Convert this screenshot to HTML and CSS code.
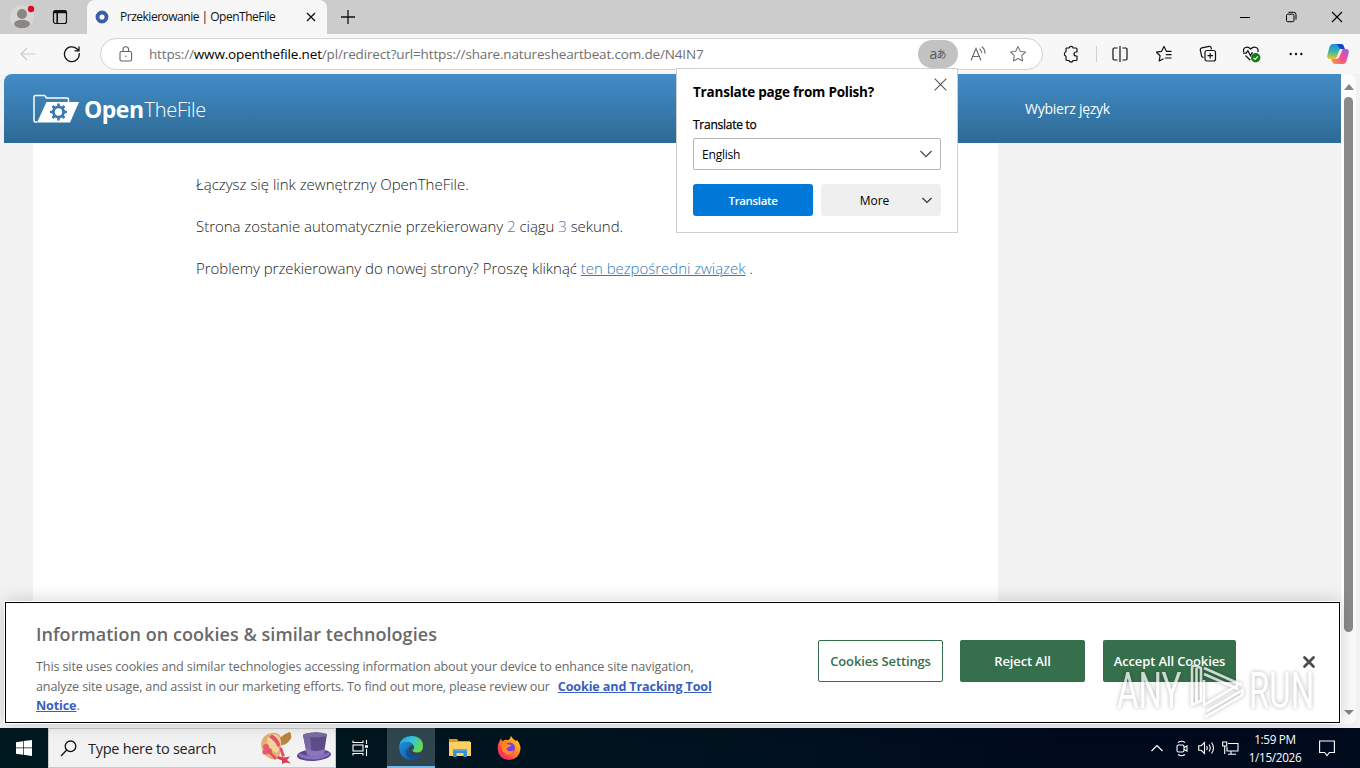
FILE: index.html
```html
<!DOCTYPE html>
<html lang="pl">
<head>
<meta charset="utf-8">
<title>Przekierowanie | OpenTheFile</title>
<link rel="stylesheet" href="styles.css">
</head>
<body>
<div class="screen">
  <div class="tabstrip">
    <div class="tabstrip-left">
      <svg class="avatar" width="26" height="26" viewBox="0 0 26 26"><circle cx="13" cy="13" r="12" fill="#d8d6d4"/><circle cx="13" cy="10" r="5" fill="#8b8683"/><ellipse cx="13" cy="20" rx="8" ry="4.2" fill="#8b8683"/><circle cx="22" cy="5" r="3.2" fill="#d80f24"/></svg>
      <svg class="workspace" width="16" height="16" viewBox="0 0 16 16" fill="none" stroke="#111" stroke-width="1.2"><rect x="1.5" y="1.5" width="13" height="13" rx="2"/><path d="M1.500 3.400h13M2 2.400h12M5.200 4v10" stroke-width="1.600"/></svg>
    </div>
    <div class="tab">
      <svg width="14" height="14" viewBox="0 0 14 14"><circle cx="7" cy="7" r="4.500" fill="#fff" stroke="#3b5fa6" stroke-width="3.900"/></svg>
      <span class="tab-title">Przekierowanie | OpenTheFile</span>
      <svg class="tab-close" width="10" height="10" viewBox="0 0 10 10" stroke="#111" stroke-width="1.300"><path d="M1 1l8 8M9 1l-8 8"/></svg>
    </div>
    <svg class="newtab" width="14" height="14" viewBox="0 0 14 14" stroke="#111" stroke-width="1.300"><path d="M7 0v14M0 7h14"/></svg>
    <div class="window-buttons">
      <svg width="12" height="12" viewBox="0 0 12 12" stroke="#000"><path d="M1 6.500h10"/></svg>
      <svg width="12" height="12" viewBox="0 0 12 12" fill="none" stroke="#000"><rect x="1.500" y="3.200" width="7.500" height="7.500" rx="1.300"/><path d="M3.500 1.300h5.200a2.300 2.300 0 0 1 2.300 2.300v5"/></svg>
      <svg width="12" height="12" viewBox="0 0 12 12" stroke="#000" stroke-width="1.100"><path d="M1 1l10 10M11 1L1 11"/></svg>
    </div>
  </div>

  <div class="toolbar">
    <svg class="back" width="16" height="14" viewBox="0 0 16 14" fill="none" stroke="#c9c9c9" stroke-width="1.100"><path d="M15.500 7H1M7 1L1 7l6 6"/></svg>
    <svg class="reload" width="18" height="18" viewBox="0 0 18 18" fill="none" stroke="#111" stroke-width="1.300"><path d="M16.200 8.200a7.400 7.400 0 1 1-2.400-4.500l1.900 1.800M16 1.500v4.300h-4.400"/></svg>
    <div class="address">
      <svg class="lock" width="14" height="16" viewBox="0 0 14 16" fill="none" stroke="#666" stroke-width="1.100"><rect x="1" y="5.500" width="11.600" height="9.500" rx="1.500"/><path d="M4 5.500V3.600a2.800 2.800 0 0 1 5.600 0v1.900"/><circle cx="6.800" cy="10.200" r=".7" fill="#666" stroke="none"/></svg>
      <span class="url">https://<b>www.openthefile.net</b>/pl/redirect?url=https://share.naturesheartbeat.com.de/N4IN7</span>
      <span class="translate-pill">a<small>あ</small></span>
      <svg class="aloud" width="18" height="16" viewBox="0 0 18 16" fill="none" stroke="#666" stroke-width="1.100"><path d="M1 14.500L6 2.500l5 12M2.700 10.500h6.600M9.500 2.600q2.200 1.800 2.400 4.600M11.800.8q3.300 2.600 3.200 7"/></svg>
      <svg class="star" width="18" height="18" viewBox="0 0 18 18" fill="none" stroke="#777" stroke-width="1.100" stroke-linejoin="round"><path d="M9 1.500l2.300 4.800 5.200.7-3.800 3.700.9 5.300L9 13.500 4.400 16l.9-5.300L1.500 7l5.200-.7z"/></svg>
    </div>
    <svg class="ext" width="16" height="18" viewBox="0 0 16 18" fill="none" stroke="#111" stroke-width="1.200" stroke-linejoin="round"><path d="M3.500 3H6a2.200 2.200 0 0 1 4.200 0H13a1 1 0 0 1 1 1v3h-1a1.900 1.900 0 0 0 0 4h1v3.500a1 1 0 0 1-1 1h-2.800a2.200 2.200 0 0 1-4.200 0H4a1 1 0 0 1-1-1v-3.300a2.300 2.300 0 0 1 0-4.400V4a1 1 0 0 1 .5-1z"/></svg>
    <i class="divider"></i>
    <svg class="split" width="16" height="16" viewBox="0 0 16 16" fill="none" stroke="#111" stroke-width="1.200"><path d="M8 0v16M5.600 2H2.200a1.200 1.200 0 0 0-1.200 1.200v9.600A1.200 1.200 0 0 0 2.200 14h3.400M10.400 2h3.400A1.200 1.200 0 0 1 15 3.200v9.600a1.200 1.200 0 0 1-1.200 1.200h-3.400"/></svg>
    <svg class="favs" width="18" height="18" viewBox="0 0 18 18" fill="none" stroke="#111" stroke-width="1.200" stroke-linejoin="round"><path d="M16.500 6.400h-5L9 1.500 6.600 6.300 1.500 7.200l3.600 3.500L4.200 16l4.300-2.300M10.800 9.700h5.800M9.800 13h6.800"/></svg>
    <svg class="coll" width="18" height="18" viewBox="0 0 18 18" fill="none" stroke="#111" stroke-width="1.200"><path d="M4.500 12.500l-1-.4a2 2 0 0 1-1-1.500L1.300 5.200a2 2 0 0 1 1.500-2.400L10 1.300a2 2 0 0 1 2.200 1.500l.3 1.500"/><rect x="6" y="5.500" width="10.500" height="10.500" rx="2"/><path d="M11.200 8v5.500M8.500 10.700H14"/></svg>
    <svg class="heart" width="19" height="18" viewBox="0 0 19 18" fill="none" stroke="#111" stroke-width="1.200"><path d="M1.700 7C.5 2.500 5.500.5 8.700 4 12 .5 17.300 2.500 15.800 7M1 8.200h3.200l1.700-2.500 2.600 5L10 7.800h1M3.500 10.500l4.800 4.700"/><circle cx="13.700" cy="12.700" r="4.700" fill="#107c10" stroke="none"/><path d="M11.500 12.800l1.600 1.600 2.800-3" stroke="#fff"/></svg>
    <svg class="dots" width="14" height="4" viewBox="0 0 14 4" fill="#111"><circle cx="1.700" cy="2" r="1.200"/><circle cx="7" cy="2" r="1.200"/><circle cx="12.300" cy="2" r="1.200"/></svg>
    <svg class="copilot" width="24" height="22" viewBox="0 0 24 22"><defs><linearGradient id="ca" x1="0" y1="0" x2="0" y2="1"><stop offset="0" stop-color="#1d8bf0"/><stop offset=".5" stop-color="#34b7a8"/><stop offset="1" stop-color="#f3c51f"/></linearGradient><linearGradient id="cb" x1="1" y1="0" x2="0" y2="1"><stop offset="0" stop-color="#a558e8"/><stop offset=".5" stop-color="#f0508c"/><stop offset="1" stop-color="#ff9c3c"/></linearGradient></defs><path d="M7 1h8q2 0 2.700 2l1 3h-3q-2 0-2.800 2.600L11 14q-.8 2-3 2H4q-3.500 0-2.600-4L3.500 4Q4.500 1 7 1z" fill="url(#ca)"/><path d="M13 1h2q2 0 2.700 2l1 3h-3q-2.200 0-3.300-2.500Q12 1.500 10 1z" fill="#1747c4"/><path d="M17 21H9q-2 0-2.700-2l-1-3h3q2 0 2.800-2.600L13 8q.8-2 3-2h4q3.500 0 2.600 4l-2.100 8q-1 3-3.500 3z" fill="url(#cb)"/><path d="M11.300 13l1.700-5q.5-1.500 1.700-2h2.100L13.300 14q-.8 2-3 2H8.500q2 0 2.800-3z" fill="#fff" opacity=".85"/></svg>
  </div>

  <div class="viewport">
    <div class="page">
      <header class="site-header">
        <svg class="logo" width="47" height="30" viewBox="0 0 47 30"><path d="M4 28H2.500Q1 28 1 26.500V3q0-1.500 1.500-1.500H11q1 0 1.500 1L13.500 4H34q1.500 0 1.500 1.500V8" fill="none" stroke="#fff" stroke-width="1.500"/><path d="M13.500 8H46L37 28.500H4z" fill="#fff"/><g transform="translate(25.500 18)" fill="#3a78ad"><circle r="6.500"/><path d="M-1.300-8.500h2.600v17h-2.600zM-8.500-1.300h17v2.600h-17z"/><path d="M-1.300-8.500h2.600v17h-2.600zM-8.500-1.300h17v2.600h-17z" transform="rotate(45)"/><circle r="3.700" fill="#fff"/></g></svg>
        <span class="brand-bold">Open</span><span class="brand-light">TheFile</span>
        <span class="lang">Wybierz język</span>
      </header>
      <main class="sheet">
        <p><span class="p1">Łączysz się link zewnętrzny OpenTheFile.</span></p>
        <p><span class="p2">Strona zostanie automatycznie przekierowany <em>2</em> ciągu <em>3</em> sekund.</span></p>
        <p><span class="p2">Problemy przekierowany do nowej strony? Proszę kliknąć <a>ten bezpośredni związek</a> .</span></p>
      </main>
    </div>
    <div class="scrollbar">
      <i class="arrow up"></i><i class="thumb"></i><i class="arrow down"></i>
    </div>

    <section class="cookies">
      <div class="cookie-text">
        <h2>Information on cookies &amp; similar technologies</h2>
        <div class="cl"><span class="c1">This site uses cookies and similar technologies accessing information about your device to enhance site navigation,</span></div>
        <div class="cl"><span class="c2">analyze site usage, and assist in our marketing efforts. To find out more, please review our</span><a class="c3">Cookie and Tracking Tool</a></div>
        <div class="cl"><a>Notice</a>.</div>
      </div>
      <div class="btn outline"><span>Cookies Settings</span></div>
      <div class="btn"><span>Reject All</span></div>
      <div class="btn wide"><span>Accept All Cookies</span></div>
      <svg class="cookie-close" width="14" height="14" viewBox="0 0 14 14" stroke="#4d4d4d" stroke-width="2.800" stroke-linecap="round"><path d="M2.500 2.500l9 9M11.500 2.500l-9 9"/></svg>
    </section>
  </div>

  <div class="taskbar">
    <div class="start"><svg width="16" height="16" viewBox="0 0 16 16" fill="#fff"><path d="M0 2.200l7-1v6.300H0zM7.700 1.100L16 0v7.500H7.700zM0 8.300h7v6.400l-7-1zM7.700 8.300H16V16l-8.300-1.200z"/></svg></div>
    <div class="search">
      <svg width="17" height="17" viewBox="0 0 17 17" fill="none" stroke="#111" stroke-width="1.300"><circle cx="10.500" cy="6.300" r="5.300"/><path d="M6.700 10L1 16"/></svg>
      <span class="search-text">Type here to search</span>
      <svg class="hats" width="72" height="34" viewBox="0 0 72 34">
        <path d="M1 12Q3 3 12 2q6-1 9 4 5-4 9-5 3 5-1 9-3 4-8 4.500 1 7-3 12-4 3-8 1Q1 24 1 12z" fill="#e3b070"/>
        <path d="M21 6q5-4 9-5 3 5-1 9-3 4-8 4-3-3 0-8z" fill="#b98544"/>
        <path d="M7 9q2-6 8-6 7 3 6 11-1 5-5 8-8-4-9-13z" fill="#f3d39a"/>
        <path d="M12 3.500q7 4 8.500 11l-2.500 2Q15 10 9 6z" fill="#e0566c"/>
        <g fill="#e65c73"><circle cx="6" cy="16" r="3"/><circle cx="9" cy="20" r="3"/><circle cx="5" cy="21" r="2.600"/></g>
        <path d="M8 18l9 9-2 2-8-9zM19 16l3 1 3 8-3 1z" fill="#dd5069"/>
        <path d="M18 25l6 1.500 6-1-3 3.500 4 3.500-5-1-4 1.500 0-3.500-5-2z" fill="#d93d5a"/>
        <ellipse cx="54" cy="24" rx="17" ry="6" fill="#5c4790" transform="rotate(-3 54 24)"/><path d="M38 22q15 7 32-1l-1 3q-13 8-29 2z" fill="#8772bd"/>
        <path d="M43 4q11-5 24-1l-3 19q-8 5-17 2z" fill="#5d4d86"/><path d="M43 4l4 20 5 1-2-21z" fill="#7968a4"/><ellipse cx="55" cy="4" rx="12" ry="2.600" fill="#7c6ba0"/><path d="M46 18q9 4 19 0l-.8 5q-8 4-17 1z" fill="#8a78bb"/>
      </svg>
    </div>
    <div class="task"><svg width="17" height="16" viewBox="0 0 17 16" fill="none" stroke="#fff" stroke-width="1.100"><path d="M1 .5v2h10v-2M1 15.500v-2h10v2M14.500 0v4M14.500 9v7"/><rect x="1" y="5" width="10" height="6"/><path d="M13 6.500h3" stroke-width="2.500"/></svg></div>
    <div class="task active"><svg width="26" height="26" viewBox="0 0 26 26"><defs><linearGradient id="ea" x1="0" y1="0" x2="1" y2=".4"><stop offset="0" stop-color="#1fa2e0"/><stop offset=".55" stop-color="#35c4dd"/><stop offset="1" stop-color="#66d84f"/></linearGradient><linearGradient id="eb" x1="0" y1="0" x2="1" y2="1"><stop offset="0" stop-color="#1c93dc"/><stop offset="1" stop-color="#0c4a94"/></linearGradient></defs><path d="M1.200 11Q3 1 13.500 1 25 1.500 25 11.500q0 6-6 6-5-.2-4.500-2.500 2-1 1.500-3.500Q14.500 7 9 7q-5.500 0-7.800 4z" fill="url(#ea)"/><path d="M1.200 11Q3.500 6.500 9 7q5 .5 6.800 4-3-1.500-4.800 1-2.500 6 4 9 3.500 1.300 8-.8Q19.500 25 13 25 1 24 1.200 11z" fill="url(#eb)"/><path d="M9 12q-4 8 4.500 13 6-.3 9.500-4.800-5 2-8.500.8Q9 18 9 12z" fill="#104e9c"/></svg></div>
    <div class="task"><svg width="22" height="20" viewBox="0 0 22 20"><path d="M0 1h8l1.500 2H21v4H0z" fill="#e29a1c"/><path d="M0 4h22v14H0z" fill="#fbd05e"/><path d="M4 11h14v8h-3.500v-4h-7v4H4z" fill="#3c8ed0"/><path d="M4 11h14v2H4z" fill="#58a8e4"/></svg></div>
    <div class="task"><svg width="24" height="24" viewBox="0 0 24 24"><defs><linearGradient id="fa" x1="1" y1="0" x2="0" y2="1"><stop offset="0" stop-color="#ffe52e"/><stop offset=".4" stop-color="#ff9020"/><stop offset=".75" stop-color="#ff3850"/><stop offset="1" stop-color="#e0208c"/></linearGradient></defs><path d="M2 6Q3 4 4 2.500 4.500 5 6 5q2-2 5-1 2-.5 3-4 2 3.500 5 5l1-1q3.500 4 3.500 9Q22.500 23 12 24 1 23 .7 13 .6 9 2 6z" fill="url(#fa)"/><circle cx="12.500" cy="12" r="5.500" fill="#7b3fe0"/><path d="M4.500 8q4-2.500 7 .5l3 .5q-1 2-3.500 2.200Q9 12 10 14q3 2.500 7 0-2 5-7 4.500Q4 17 4.500 8z" fill="#ff8a26"/></svg></div>
    <div class="tray">
      <svg class="chev" width="12" height="8" viewBox="0 0 12 8" fill="none" stroke="#fff" stroke-width="1.200"><path d="M.5 7L6 1.500 11.500 7"/></svg>
      <svg class="meet" width="12" height="17" viewBox="0 0 12 17" fill="none" stroke="#fff" stroke-width="1.100"><rect x="1" y="5" width="7" height="7" rx="1.500"/><path d="M8 7.500l3-1.500v5L8 9.500M2 2.500Q5.500 0 9 2.500M2 14.500q3.500 2.500 7 0"/></svg>
      <svg class="vol" width="17" height="14" viewBox="0 0 17 14" fill="none" stroke="#fff" stroke-width="1.100"><path d="M.7 4.700h2.500L6.500 1.500v11L3.200 9.300H.7zM8.500 5q1.500 2 0 4M11 3.500q2.500 3.500 0 7M13.500 1.500q4 5.500 0 11"/></svg>
      <svg class="net" width="17" height="14" viewBox="0 0 17 14" fill="none" stroke="#fff" stroke-width="1.100"><path d="M6 2.500h10v7.500H5V6M9 10v3M6 13.200h8M.7 1h4v4h-4zM2.700 5v8"/></svg>
      <div class="clock"><span class="time">1:59 PM</span><span class="date">1/15/2026</span></div>
      <svg class="note" width="16" height="17" viewBox="0 0 16 17" fill="none" stroke="#fff" stroke-width="1.100"><path d="M.6 1h14.800v11.500h-5L8 15.500l-2.400-3h-5z"/></svg>
    </div>
  </div>

  <div class="popup">
    <svg class="popup-close" width="13" height="13" viewBox="0 0 13 13" stroke="#555" stroke-width="1.100"><path d="M.7.7l11.600 11.600M12.300.7L.7 12.300"/></svg>
    <div class="popup-title">Translate page from Polish?</div>
    <div class="popup-label">Translate to</div>
    <div class="select"><span>English</span><svg width="12" height="8" viewBox="0 0 12 8" fill="none" stroke="#444" stroke-width="1.200"><path d="M.5 1L6 6.700 11.500 1"/></svg></div>
    <div class="popup-actions">
      <div class="primary">Translate</div>
      <div class="more"><span>More</span><svg width="10" height="7" viewBox="0 0 10 7" fill="none" stroke="#333" stroke-width="1.200"><path d="M.5 1L5 5.500 9.500 1"/></svg></div>
    </div>
  </div>

  <div class="watermark"><div class="wm-word"><span>ANY</span></div><svg width="56" height="58" viewBox="0 0 56 58" fill="none" stroke="#fff" stroke-width="2.600" stroke-linejoin="round"><path d="M3 43V6q0-3 4-2l5 2v33zM7.500 40V6M15 6l38 17M15 12l34 15M15 18v25l34-20M18 49l34-20M16 55l36-21q3-3 1-7"/></svg><div class="wm-word"><span>RUN</span></div></div>
</div>
</body>
</html>
```
FILE: styles.css
```css
* { box-sizing: border-box; }
body { margin: 0; font-family: "Open Sans", "Noto Sans", sans-serif; font-size: 12px; color: #111; }
svg { display: block; flex: none; }
.screen { position: relative; width: 1360px; height: 768px; overflow: hidden; background: #f7f7f7; display: flex; flex-direction: column; }
.screen span, .screen a { white-space: nowrap; }

.tabstrip { height: 34px; background: #ccc; display: flex; align-items: center; }
.tabstrip-left { width: 87px; height: 34px; display: flex; align-items: center; padding-left: 9px; }
.workspace { margin-left: 17px; }
.tab { width: 240px; height: 34px; background: #f7f7f7; border-radius: 8px 8px 0 0; display: flex; align-items: center; padding: 0 11px 0 8px; }
.tab-title { margin-left: 11px; margin-top: -1px; flex: 1; letter-spacing: -0.49px; }
.newtab { margin-left: 14px; }
.window-buttons { margin-left: auto; display: flex; gap: 34px; padding-right: 17px; }

.toolbar { height: 40px; display: flex; align-items: center; padding-left: 20px; background: #f7f7f7; }
.reload { margin-left: 27px; }
.address { margin-left: 19px; width: 943px; height: 32px; border: 1px solid #d2d2d2; border-radius: 16px; background: #fff; display: flex; align-items: center; padding-left: 18px; }
.url { margin-left: 16px; color: #707070; font-size: 13.500px; flex: none; letter-spacing: -0.157px; }
.url b { font-weight: 400; color: #000; }
.translate-pill { margin-left: auto; width: 40px; height: 28px; border-radius: 14px; background: #c2c2c2; color: #555; display: flex; align-items: center; justify-content: center; font: 14px/20px "Open Sans", "Noto Sans CJK JP", sans-serif; flex: none; }
.translate-pill small { font-size: 10px; margin-left: -1px; }
.aloud { margin-left: 12px; }
.star { margin: 0 15px 0 21px; }
.ext { margin-left: 20px; }
.divider { width: 1px; height: 16px; background: #cfcfcf; margin: 0 15px 0 17px; }
.favs { margin-left: 27px; }
.coll { margin-left: 26px; }
.heart { margin-left: 25px; }
.dots { margin-left: 28px; }
.copilot { margin-left: 23px; }

.viewport { position: relative; height: 654px; padding: 0 4px 4px; display: flex; background: #f0f2f5; }
.page { width: 1337px; height: 650px; background: #f2f2f2; border-radius: 8px 0 0 8px; overflow: hidden; }
.site-header { height: 69px; background: linear-gradient(#438cc7, #2d6a95); display: flex; align-items: center; padding-left: 29px; color: #fff; }
.brand-bold { margin-left: 4px; font-weight: 700; font-size: 23px; letter-spacing: -0.5px; }
.brand-light { font-weight: 300; font-size: 20px; margin-left: 1px; letter-spacing: -0.27px; padding-top: 1px; }
.lang { margin-left: 819px; margin-top: -1px; font-size: 14px; letter-spacing: -0.25px; }
.sheet { margin-left: 29px; width: 965px; height: 581px; background: #fff; padding: 31px 0 0 163px; font-weight: 300; font-size: 15px; color: #222; }
.sheet p { margin: 0 0 21px; height: 21px; line-height: 21px; }
.p2 { letter-spacing: -0.035px; }
.sheet em { font-style: normal; color: #3a7db8; }
.sheet a { color: #337ab7; text-decoration: underline; }
.scrollbar { width: 15px; height: 650px; background: #fcfcfc; border-radius: 0 8px 8px 0; display: flex; flex-direction: column; align-items: center; padding: 10px 0 9px; }
.arrow { border: 5px solid transparent; width: 0; height: 0; }
.arrow.up { border-bottom-color: #858585; border-top-width: 0; border-bottom-width: 6px; }
.arrow.down { border-top-color: #858585; border-bottom-width: 0; margin-top: auto; }
.thumb { width: 9px; height: 535px; border-radius: 5px; background: #8a8a8a; margin-top: 7px; }

.cookies { position: absolute; left: 5px; top: 528px; width: 1335px; height: 121px; background: #fff; border: 1px solid #000; outline: 1px solid #fff; box-shadow: 0 0 18px rgba(0,0,0,.2); display: flex; align-items: flex-start; padding-left: 30px; }
.cookie-text { width: 782px; padding-top: 18px; color: #696969; }
.cookie-text h2 { margin: 0 0 10px; height: 26px; line-height: 26px; font-size: 18px; font-weight: 600; letter-spacing: 0.055px; white-space: nowrap; }
.cl { height: 19.500px; line-height: 19.500px; font-size: 12.600px; letter-spacing: -0.14px; }
.c1 { letter-spacing: -0.126px; }
.c2 { letter-spacing: -0.165px; }
.cl a { color: #3860be; font-weight: 700; text-decoration: underline; }
.c3 { margin-left: 8px; }
.btn { margin-top: 37px; width: 125px; height: 42px; background: #366f4b; border-radius: 2px; color: #fff; font-size: 13px; font-weight: 600; letter-spacing: -0.13px; display: flex; align-items: center; justify-content: center; margin-right: 17px; flex: none; }
.outline { background: #fff; border: 1px solid #366f4b; color: #366f4b; }
.wide { width: 133px; margin-left: 1px; margin-right: 66px; }
.cookie-close { margin-top: 52px; }

.taskbar { height: 40px; background: linear-gradient(90deg, #00191f, #001320 50%, #000a1c 80%, #010b1e); display: flex; color: #fff; }
.start { width: 48px; display: flex; align-items: center; justify-content: center; }
.search { width: 288px; background: #f2f2f2; border: 1px solid #c8c8c8; display: flex; align-items: center; padding-left: 11px; color: #222; }
.search-text { margin-left: 11px; font-size: 14.500px; letter-spacing: -0.28px; }
.hats { margin-left: auto; margin-right: 3px; }
.task { width: 49px; display: flex; align-items: center; justify-content: center; }
.task.active { width: 48px; background: #30464e; border-bottom: 2px solid #76b9ed; padding-top: 1px; margin-left: 2px; }
.tray { margin-left: auto; display: flex; align-items: center; padding-right: 25px; }
.meet { margin-left: 13px; }
.vol { margin-left: 10px; }
.net { margin-left: 7px; }
.clock { width: 72px; display: flex; flex-direction: column; align-items: center; line-height: 18px; font-size: 11.700px; letter-spacing: -0.3px; }
.note { margin-left: 8px; }

.popup { position: absolute; left: 676px; top: 68px; width: 282px; height: 165px; background: #fff; border: 1px solid #d0d0d0; padding: 13px 16px 0; color: #000; }
.popup-close { position: absolute; right: 10px; top: 9px; }
.popup-title { height: 20px; line-height: 20px; font-size: 13.500px; font-weight: 700; letter-spacing: -0.21px; }
.popup-label { margin-top: 14px; height: 18px; line-height: 18px; letter-spacing: -0.25px; -webkit-text-stroke: 0.25px #000; }
.select { margin-top: 4px; height: 32px; border: 1px solid #b5b5b5; border-radius: 2px; display: flex; align-items: center; justify-content: space-between; padding: 0 8px; letter-spacing: -0.2px; }
.popup-actions { display: flex; gap: 8px; margin-top: 14px; }
.primary, .more { width: 120px; height: 32px; border-radius: 3px; display: flex; align-items: center; justify-content: center; }
.primary { background: #0078d7; color: #fff; font-weight: 600; font-size: 11.500px; letter-spacing: -0.35px; }
.more { background: #efefef; padding-left: 30px; gap: 33px; }

.watermark { position: absolute; left: 1117px; top: 662px; width: 198px; height: 58px; display: flex; align-items: center; color: #fff; opacity: .75; font: 400 50px/56px Roboto, sans-serif; filter: drop-shadow(0 0 2px rgba(0,0,0,.4)); }
.watermark svg { margin: 0 4px 0 6px; }
.wm-word { width: 66px; }
.wm-word span { display: inline-block; transform: scaleX(.66); transform-origin: 0 50%; }
```
